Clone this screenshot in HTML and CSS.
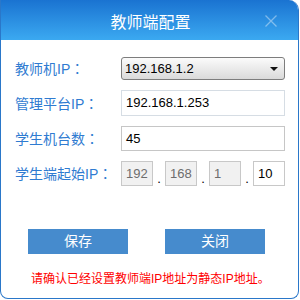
FILE: index.html
```html
<!DOCTYPE html>
<html>
<head>
	<meta charset="utf-8">
	<title>教师端配置</title>
	<link rel="stylesheet" href="styles.css">
</head>
<body>
<div class="dialog">
	<div class="title_bar">
		<h1 class="title">教师端配置</h1>
		<a href="" class="close">
			<svg width="12" height="12" viewBox="0 0 12 12"><path d="M0.5 0.5 L11.5 11.5 M11.5 0.5 L0.5 11.5" stroke="#ffffff" stroke-width="1.3" fill="none"/></svg>
		</a>
	</div>
	<div class="form">
		<div class="label">教师机IP<span class="colon">：</span></div>
		<div class="select">
			<span>192.168.1.2</span>
			<i class="arrow"></i>
		</div>
		<div class="label">管理平台IP<span class="colon">：</span></div>
		<div class="input light">192.168.1.253</div>
		<div class="label">学生机台数<span class="colon">：</span></div>
		<div class="input">45</div>
		<div class="label">学生端起始IP<span class="colon">：</span></div>
		<div class="ip_group">
			<div class="ip_box disabled">192</div>
			<span class="dot">.</span>
			<div class="ip_box disabled">168</div>
			<span class="dot">.</span>
			<div class="ip_box disabled">1</div>
			<span class="dot">.</span>
			<div class="ip_box">10</div>
		</div>
	</div>
	<div class="buttons">
		<a href="" class="btn">保存</a>
		<a href="" class="btn">关闭</a>
	</div>
	<p class="notice">请确认已经设置教师端IP地址为静态IP地址。</p>
</div>
</body>
</html>
```

FILE: styles.css
```css
body, h1, p {
	margin: 0;
	padding: 0;
}
body {
	background-color: #ffffff;
	font-family: "Liberation Sans", "Noto Sans CJK SC", sans-serif;
}
a {
	text-decoration: none;
}
.dialog {
	width: 299px;
	height: 299px;
	box-sizing: border-box;
	border: 1px solid #2a77c9;
	border-top: 0;
	border-radius: 0 10px 8px 8px;
	overflow: hidden;
	background-color: #ffffff;
}
.dialog .title_bar {
	position: relative;
	display: flex;
	justify-content: center;
	align-items: center;
	height: 40px;
	background: linear-gradient(#1a73d1, #3ba9f1);
}
.dialog .title_bar .title {
	font-size: 16px;
	font-weight: normal;
	color: #ffffff;
	margin-left: 2px;
	margin-top: 2px;
}
.dialog .title_bar .close {
	position: absolute;
	left: 264px;
	top: 15px;
	width: 12px;
	height: 12px;
	opacity: 0.4;
}
.dialog .title_bar .close svg {
	display: block;
}
.dialog .form {
	display: grid;
	grid-template-columns: 106px 164px;
	row-gap: 10px;
	padding: 17px 0 0 14px;
	align-items: center;
}
.dialog .form .label {
	font-size: 14px;
	color: #2f7bd1;
	line-height: 16px;
}
.dialog .form .label .colon {
	font-family: "Noto Sans CJK TC", sans-serif;
}
.dialog .form .select {
	display: flex;
	align-items: center;
	justify-content: space-between;
	height: 23px;
	box-sizing: border-box;
	padding: 0 6px 0 3px;
	border: 1px solid #7d7d7d;
	border-radius: 3px;
	background: linear-gradient(#fbfbfb, #dadada);
	font-size: 13px;
	color: #000000;
}
.dialog .form .select .arrow {
	width: 0;
	height: 0;
	border-left: 4px solid transparent;
	border-right: 4px solid transparent;
	border-top: 4px solid #111111;
}
.dialog .form .input {
	height: 25px;
	box-sizing: border-box;
	padding: 0 4px;
	border: 1px solid #c6c6c6;
	font-size: 13px;
	line-height: 23px;
	color: #000000;
}
.dialog .form .input.light {
	height: 26px;
	line-height: 24px;
	border-color: #d6dde4;
}
.dialog .form .ip_group {
	display: flex;
	align-items: flex-end;
}
.dialog .form .ip_group .ip_box {
	width: 32px;
	height: 25px;
	box-sizing: border-box;
	padding-left: 4px;
	border: 1px solid #c8c8c8;
	font-size: 13px;
	line-height: 23px;
	color: #000000;
	background-color: #ffffff;
}
.dialog .form .ip_group .ip_box.disabled {
	background-color: #f1f1f1;
	color: #6d6d6d;
}
.dialog .form .ip_group .dot {
	width: 12px;
	text-align: center;
	font-size: 13px;
	line-height: 14px;
	color: #000000;
}
.dialog .buttons {
	display: flex;
	gap: 37px;
	padding: 43px 0 0 27px;
}
.dialog .buttons .btn {
	display: block;
	width: 100px;
	height: 25px;
	line-height: 25px;
	text-align: center;
	font-size: 14px;
	color: #ffffff;
	background-color: #468bcd;
}
.dialog .notice {
	padding: 17px 0 0 30px;
	font-size: 12px;
	line-height: 16px;
	color: #ff0000;
}
```
